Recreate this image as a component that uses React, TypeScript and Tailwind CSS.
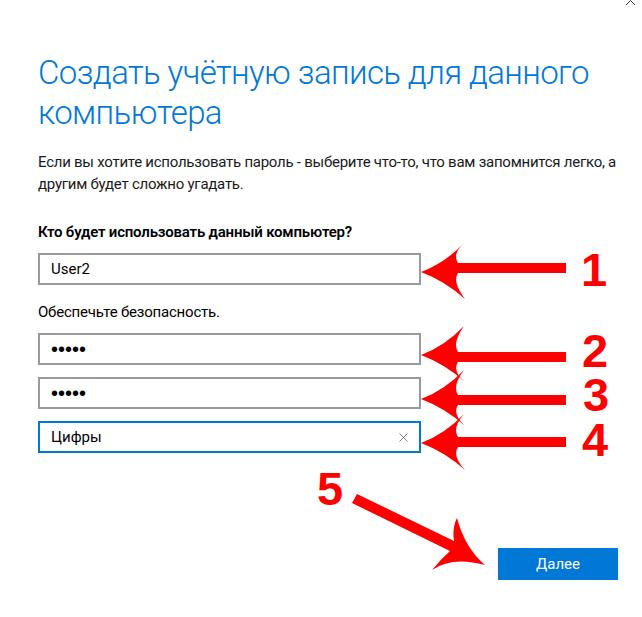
import React from "react";
import { X } from "lucide-react";

const leftArrow = (ty: number, sy: number) =>
  `M421,${ty} Q445,${ty - 9} 464,${ty - 29} Q452,${sy - 14} 458,${sy - 5} L566,${sy - 5} L566,${sy + 5} L458,${sy + 5} Q452,${sy + 14} 465,${ty + 27} Q445,${ty + 9} 421,${ty} Z`;

const Field: React.FC<{ children: React.ReactNode; active?: boolean }> = ({ children, active }) => (
  <div
    className={
      active
        ? "flex items-center w-[383px] h-[32px] border-2 border-[#0078d7] pl-[11px] pr-[8px]"
        : "flex items-center w-[383px] h-[32px] border-2 border-[#999999] pl-[11px] pr-[8px]"
    }
  >
    {children}
  </div>
);

const Dots = () => (
  <span className="text-[20px] leading-none text-black font-['Liberation_Sans',sans-serif]">
    •••••
  </span>
);

// red step numbers over the screenshot
const steps = [
  { n: "1", cls: "left-[574px] top-[253px]" },
  { n: "2", cls: "left-[575px] top-[334px]" },
  { n: "3", cls: "left-[576px] top-[378px]" },
  { n: "4", cls: "left-[575px] top-[423px]" },
  { n: "5", cls: "left-[310px] top-[472px]" },
];

export default function App() {
  return (
    <div className="relative w-[642px] h-[617px] bg-white overflow-hidden font-['Roboto','Noto_Sans',sans-serif] text-black">
      <div className="pl-[38px] pt-[53px]">
        <h1 className="text-[33px] leading-[40px] font-light tracking-[-0.6px] text-[#0078d7] whitespace-nowrap">
          Создать учётную запись для данного
          <br />
          компьютера
        </h1>
        <p className="mt-[18px] text-[15px] leading-[22px] tracking-[-0.25px] text-[#1a1a1a] whitespace-nowrap">
          Если вы хотите использовать пароль - выберите что-то, что вам запомнится легко, а
          <br />
          другим будет сложно угадать.
        </p>
        <div className="mt-[26px] text-[15px] leading-[22px] font-semibold tracking-[-0.2px]">
          Кто будет использовать данный компьютер?
        </div>
        <div className="mt-[10px]">
          <Field>
            <span className="text-[15px]">User2</span>
          </Field>
        </div>
        <div className="mt-[16px] text-[15px] leading-[22px] tracking-[-0.2px]">Обеспечьте безопасность.</div>
        <div className="mt-[10px] flex flex-col gap-[12px]">
          <Field>
            <Dots />
          </Field>
          <Field>
            <Dots />
          </Field>
          <Field active>
            <span className="flex-1 text-[15px]">Цифры</span>
            <X size={15} strokeWidth={1.2} className="text-[#555]" />
          </Field>
        </div>
      </div>
      <div className="flex justify-end pr-[24px] mt-[95px]">
        <button className="w-[120px] h-[32px] bg-[#0078d7] text-white text-[15px]">Далее</button>
      </div>

      <svg
        className="absolute left-0 top-0 pointer-events-none"
        width="642"
        height="617"
        viewBox="0 0 642 617"
      >
        <polyline points="626,5 630.5,0.5 635,5" fill="none" stroke="#333" strokeWidth="1" />
        <g fill="#ff0000">
          <path d={leftArrow(272, 268)} />
          <path d={leftArrow(355, 357)} />
          <path d={leftArrow(399, 400)} />
          <path d={leftArrow(443, 442)} />
          <path d="M357,494 L454,541 Q452,528 457,518 Q465,548 485,565 Q452,556 432,570 Q440,560 450,551 L352,503 Z" />
        </g>
      </svg>
      {steps.map((s) => (
        <div
          key={s.n}
          className={`absolute ${s.cls} w-[40px] text-center text-[47px] leading-[34px] font-bold text-[#ff0000] font-['Liberation_Sans',Arial,sans-serif]`}
        >
          {s.n}
        </div>
      ))}
    </div>
  );
}
